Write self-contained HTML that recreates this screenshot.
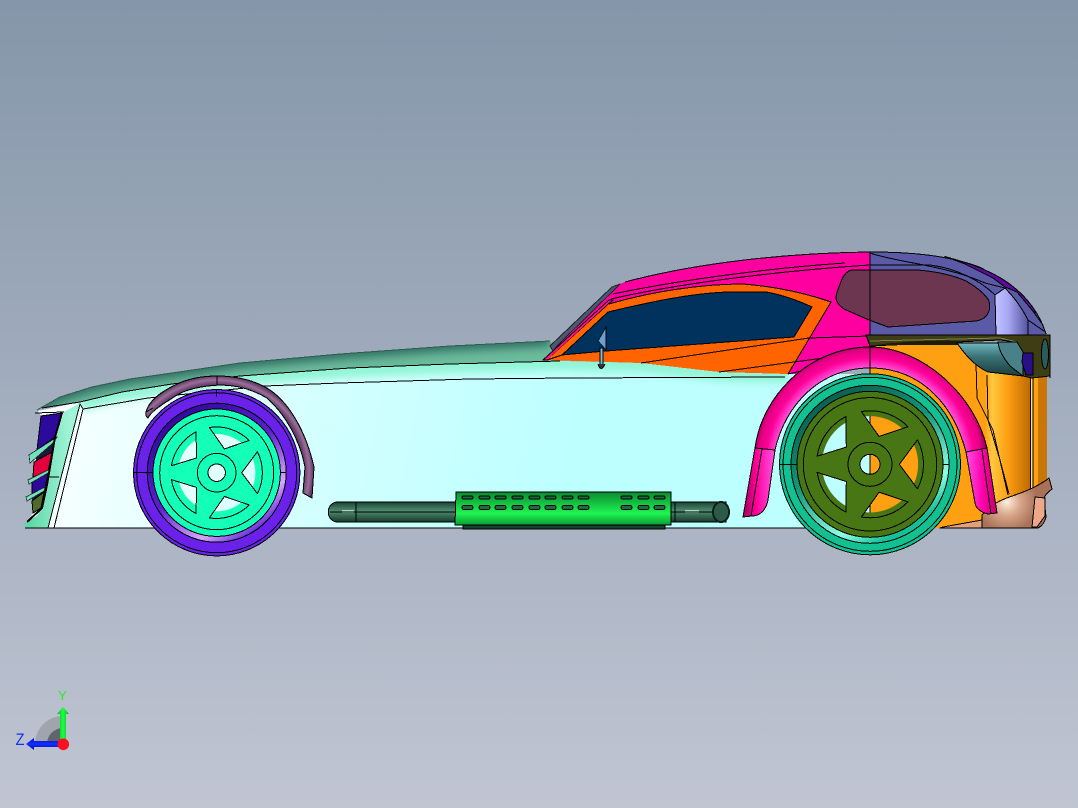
<!DOCTYPE html>
<html><head><meta charset="utf-8"><style>html,body{margin:0;padding:0;width:1078px;height:808px;overflow:hidden}svg{display:block}</style></head><body>
<svg width="1078" height="808" viewBox="0 0 1078 808" xmlns="http://www.w3.org/2000/svg" stroke-linejoin="round">
<defs>
<linearGradient id="bg" x1="0" y1="0" x2="0" y2="1"><stop offset="0" stop-color="#8596aa"/><stop offset="1" stop-color="#c0c5d2"/></linearGradient>
<linearGradient id="body" gradientUnits="userSpaceOnUse" x1="60" y1="400" x2="560" y2="500"><stop offset="0" stop-color="#f8ffff"/><stop offset=".5" stop-color="#d4ffff"/><stop offset="1" stop-color="#bdffff"/></linearGradient>
<linearGradient id="fascia" gradientUnits="userSpaceOnUse" x1="30" y1="0" x2="70" y2="0"><stop offset="0" stop-color="#60d8a8"/><stop offset="1" stop-color="#a0f4d8"/></linearGradient>
<linearGradient id="orange" gradientUnits="userSpaceOnUse" x1="985" y1="0" x2="1030" y2="0"><stop offset="0" stop-color="#ff9f12"/><stop offset=".16" stop-color="#ffc83e"/><stop offset=".5" stop-color="#ff9f12"/><stop offset="1" stop-color="#bf6a04"/></linearGradient>
<radialGradient id="farch" gradientUnits="userSpaceOnUse" cx="870" cy="462" r="118"><stop offset=".8" stop-color="#ff50d8"/><stop offset=".88" stop-color="#ff0098"/><stop offset=".95" stop-color="#e00080"/><stop offset="1" stop-color="#800045"/></radialGradient>
<linearGradient id="legL" gradientUnits="userSpaceOnUse" x1="746" y1="0" x2="774" y2="0"><stop offset="0" stop-color="#b00068"/><stop offset=".35" stop-color="#ff0098"/><stop offset="1" stop-color="#ff50e0"/></linearGradient>
<linearGradient id="legR" gradientUnits="userSpaceOnUse" x1="966" y1="0" x2="994" y2="0"><stop offset="0" stop-color="#ff50e8"/><stop offset=".6" stop-color="#ff00a8"/><stop offset="1" stop-color="#d00078"/></linearGradient>
<radialGradient id="rarch" gradientUnits="userSpaceOnUse" cx="217" cy="472" r="97"><stop offset=".89" stop-color="#5c3058"/><stop offset=".95" stop-color="#98709c"/><stop offset="1" stop-color="#5c3058"/></radialGradient>
<linearGradient id="pipe" x1="0" y1="0" x2="0" y2="1"><stop offset="0" stop-color="#1a4432"/><stop offset=".45" stop-color="#4f8c72"/><stop offset="1" stop-color="#163a2a"/></linearGradient>
<linearGradient id="muff" x1="0" y1="0" x2="0" y2="1"><stop offset="0" stop-color="#0a8a30"/><stop offset=".65" stop-color="#20f552"/><stop offset="1" stop-color="#0b9a34"/></linearGradient>
<linearGradient id="g1" x1="0" y1="0" x2=".7" y2="1"><stop offset="0" stop-color="#2a0090"/><stop offset=".55" stop-color="#5a20d0"/><stop offset=".85" stop-color="#d8a8f8"/><stop offset="1" stop-color="#6a30e0"/></linearGradient>
<linearGradient id="g2" x1="0" y1="0" x2=".6" y2="1"><stop offset="0" stop-color="#0a4a40"/><stop offset=".5" stop-color="#109878"/><stop offset=".85" stop-color="#90ffe8"/><stop offset="1" stop-color="#14c098"/></linearGradient>
<linearGradient id="ygrad" x1="0" y1="0" x2="1" y2="0"><stop offset="0" stop-color="#08b030"/><stop offset=".5" stop-color="#20ff40"/><stop offset="1" stop-color="#08b030"/></linearGradient>
<linearGradient id="zgrad" x1="0" y1="0" x2="0" y2="1"><stop offset="0" stop-color="#0808c0"/><stop offset=".5" stop-color="#1030ff"/><stop offset="1" stop-color="#0808a0"/></linearGradient>
<radialGradient id="bump" gradientUnits="userSpaceOnUse" cx="1007" cy="502" r="30"><stop offset="0" stop-color="#fdeede"/><stop offset=".45" stop-color="#d8a68a"/><stop offset="1" stop-color="#a87258"/></radialGradient>
<linearGradient id="lav" gradientUnits="userSpaceOnUse" x1="996" y1="0" x2="1030" y2="0"><stop offset="0" stop-color="#c0c0ff"/><stop offset=".35" stop-color="#a8a8f4"/><stop offset="1" stop-color="#4c4c96"/></linearGradient>
<linearGradient id="teal" x1="0" y1="0" x2="0" y2="1"><stop offset="0" stop-color="#6fb8c0"/><stop offset=".4" stop-color="#3c7478"/><stop offset="1" stop-color="#1a3c3c"/></linearGradient>
<filter id="bl" x="-10%" y="-50%" width="120%" height="200%"><feGaussianBlur stdDeviation="4"/></filter>
<filter id="bl2" x="-10%" y="-50%" width="120%" height="200%"><feGaussianBlur stdDeviation="5"/></filter>
<clipPath id="hoodc"><path d="M37,410L60,397L92,387L130,379L172,373L240,363L340,354L450,346L550,341L560,361L450,364L350,368L240,376L172,384L122,392L80,402L42,408Z"/></clipPath>
<clipPath id="bodyc"><path d="M42,408L80,402L122,392L172,384L240,376L350,368L450,364L560,361L641,363L719,372L788,374V528H25Z"/></clipPath>
<path id="h1" d="M25,0L35.5,-15.5 A40.7,40.7 0 0 1 35.5,15.5Z"/>
<path id="p1" d="M25,0L40.7,-21A46.7,46.7 0 0 1 40.7,21Z"/>
<path id="h2" d="M29.3,0L44,-19.5A48,48 0 0 1 44,19.5Z"/>
<path id="p2" d="M29.3,0L47.5,-24.5A53,53 0 0 1 47.5,24.5Z"/>
<mask id="m1" maskUnits="userSpaceOnUse" x="100" y="350" width="240" height="240"><rect x="100" y="350" width="240" height="240" fill="#fff"/>
<g transform="translate(216.7 472.7)" fill="#000"><use href="#h1"/><use href="#h1" transform="rotate(72)"/><use href="#h1" transform="rotate(144)"/><use href="#h1" transform="rotate(216)"/><use href="#h1" transform="rotate(288)"/><circle r="8.7"/></g></mask>
<mask id="m2" maskUnits="userSpaceOnUse" x="750" y="350" width="240" height="240"><rect x="750" y="350" width="240" height="240" fill="#fff"/>
<g transform="translate(870 464.3)" fill="#000"><use href="#h2"/><use href="#h2" transform="rotate(72)"/><use href="#h2" transform="rotate(144)"/><use href="#h2" transform="rotate(216)"/><use href="#h2" transform="rotate(288)"/><circle r="10"/></g></mask>
</defs>
<rect width="1078" height="808" fill="url(#bg)"/>

<g shape-rendering="crispEdges" stroke="#000" stroke-width="1">
<!-- body -->
<path d="M25,528L25,524L33,513L32,497L33,477L34,462L37,450L41,416L38,411L80,402L122,392L172,384L240,376L350,368L450,364L560,361L641,363L719,372L788,374L880,374L880,528Z" fill="url(#body)" stroke="none"/>
<g clip-path="url(#bodyc)"><path d="M80,404L122,394L172,386L240,378L350,370L450,366L560,363L641,365L719,374L788,376" fill="none" stroke="#90f4d4" stroke-width="14" filter="url(#bl)"/></g>
<!-- orange rear -->
<path d="M870,345L1047,345L1047,482L982,528L930,528L870,528Z" fill="url(#orange)" stroke="none"/>
<path d="M1030,378L1047,378L1047,486L1030,492Z" fill="#ff9f12" stroke="none"/>
<path d="M1038,378L1047,378L1047,482L1038,486Z" fill="#c8760a" stroke="none"/>
<path d="M1030.5,378h2.5v114h-2.5z" fill="#ffe070" stroke="#000"/>
<path d="M976,362L977,398L993,430L1008,495M987,375L988,420L1000,460L1009,494" fill="none"/>
<path d="M943,527L982,520V528H940Z" fill="#e2a07c"/>
<!-- bumper -->
<path d="M982,515C990,505 1000,500 1015,495C1030,490 1040,485 1049,478L1052,489C1048,492 1045,495 1044,498L1046,517Q1044,525 1038,528H982Z" fill="url(#bump)"/>
<path d="M1035,497L1045,498L1045,516L1037,527L1032,527Z" fill="#eca888"/>
<!-- hood -->
<path d="M37,410L60,397L92,387L130,379L172,373L240,363L340,354L450,346L550,341L560,361L450,364L350,368L240,376L172,384L122,392L80,402L42,408Z" fill="#6cbc9e" stroke="none"/>
<g clip-path="url(#hoodc)"><path d="M37,408L60,395L92,385L130,377L172,371L240,361L340,352L450,344L550,339" fill="none" stroke="#2f6c5e" stroke-width="14" filter="url(#bl2)"/></g>
<path d="M37,410L60,397L92,387L130,379L172,373L240,363L340,354L450,346L550,341" fill="none" stroke="#2e5c50"/>
<path d="M42,408L80,402L122,392L172,384L240,376L350,368L450,364L560,361M83,409L148,398L265,386L340,383L470,379L570,378L785,377" fill="none"/>
<!-- lamp backing + fascia -->
<path d="M41,416L62,413L55,437L47,485L42,508L33,513L32,497L37,450Z" fill="#1a1a40" stroke="none"/>
<path d="M25,528L24,524L38,515L45,497L55,437L64,412L80,403L83,409L54,528Z" fill="url(#fascia)" stroke="none"/>
<path d="M35,413L64,412" fill="none"/>
<path d="M80,404L83,409L54,528L48,528Z" fill="#f4ffff"/>
<path d="M44,477L59,477" fill="none"/>
<path d="M41,416L62,413L55,437L37,450Z" fill="#2c0a9c"/>
<path d="M34,462L52,452L48,472L33,477Z" fill="#e4003c"/>
<path d="M32,478L48,474L45,488L32,497Z" fill="#2c0a9c"/>
<path d="M32,501L44,492L41,508L33,513Z" fill="#4c6c2a"/>
<g fill="#72e4bc" stroke="#222" stroke-width=".8"><path d="M29,455L57,437L53,443L30,463Z"/><path d="M28,480L50,469L48,473L29,484Z"/><path d="M26,497L45,487L44,491L27,501Z"/></g>
<path d="M62,413L55,437L47,485L42,508L27,522" fill="none" stroke-width="2"/>
<path d="M25,528H880" fill="none"/>

<!-- roof magenta -->
<path d="M543,360L613,287L625,282C700,262 790,253 870,252V352L845,350L803,374L719,372L641,363L562,359Z" fill="#ff00a0" stroke="none"/>
<path d="M625,282C700,262 790,253 870,252" fill="none"/>
<path d="M550,346L612,287L620,284L557,346L553,351Z" fill="#4c5872" stroke="#222"/>
<path d="M543,360L609,300L613,300L554,354L548,360Z" fill="#ff1088"/>
<!-- orange frame -->
<path d="M547,360L609,304C650,292 700,284 743,284C780,287 808,294 831,302L809,338L788,374L719,372L641,363Z" fill="#ff6400" stroke="none"/>
<path d="M609,304C650,292 700,284 743,284C780,287 808,294 831,302L788,374" fill="none"/>
<path d="M562,355L608,312C650,302 692,293 729,292H766C783,295 799,301 812,307L794,337L606,351Z" fill="#00325e"/>
<path d="M562,355L547,360M641,363L809,338M719,372L869,352M809,338L869,336M788,374L869,356" fill="none"/>
<path d="M611,299C680,283 780,271 869,265M613,294C680,280 770,268 845,263" fill="none"/>
<path d="M606,327L598,341L606,350Z" fill="#6aa0d0" stroke="#0a1a30"/>
<path d="M606,326V351" fill="none"/>
<path d="M600,348h3v18h-3z" fill="#7ac0e0"/>
<path d="M598,364Q601,373 605,364" fill="#334"/>

<!-- rear purple panel -->
<path d="M870,252C915,252 955,256 985,270C1015,283 1037,305 1046,334V337H870Z" fill="#5a5aa6" stroke="none"/>
<path d="M945,256.5L966,262.7C975,265 982,268 985,270C1007.5,279.75 1025.5,294.6 1037,313.6L1032,310L1017,292L1005,287L993,278L965,264Z" fill="#5c0a9a"/>
<path d="M995,295L1005,288C1014,297 1022,308 1028,320V335H996Z" fill="url(#lav)"/>
<path d="M870,252C915,252 955,256 985,270C1015,283 1037,305 1046,334" fill="none"/>
<path d="M870,253C895,262 945,265 985,283L1005,288M870,265L930,265C955,268 980,280 995,295M1028,320L1044,331M1028,320V336M1032,310L1043,325" fill="none"/>
<!-- rear glass -->
<path d="M851,270H918C940,272 955,276 966,281C978,288 986,295 989,301C990,306 990,310 988,313C986,318 981,320 976,321L888,327L869,320L844,309C838,305 836,301 836,297C837,290 840,285 842,279C845,273 848,271 851,270Z" fill="#6d3650"/>
<path d="M870,252V528" fill="none"/>

<!-- rear olive band -->
<path d="M866,335H1050V376L1032,378L1023,376V352L1017,342L1000,340L870,346Z" fill="#3e3e14"/>
<path d="M870,341L1000,338L1017,342L1023,352" fill="none" stroke="#808048"/>
<path d="M870,346C900,341 930,340 960,341L970,345H880Z" fill="#1c1c0a" stroke="none"/>
<path d="M957,343H998L1000,350L1008,363L1023,376L988,372C975,366 966,356 957,343Z" fill="url(#teal)"/>
<path d="M998,342L1017,342L1023,352V376L1010,366C1002,356 999,350 998,342Z" fill="#4a8088"/>
<path d="M1023,353H1033V375H1026L1022,362Z" fill="#2a1088"/>
<ellipse cx="1045" cy="354" rx="3.5" ry="15" fill="#2a5a5a"/>
<path d="M1050,336V378" fill="none"/>

<!-- rear fender -->
<path d="M755,448C762,395 810,347 870,347C922,347 975,395 987,448L966,452C955,410 925,368 870,368C820,368 785,405 775,450Z" fill="url(#farch)"/>
<path d="M755,448L775,450L768,500C766,510 760,516 752,516L743,517Z" fill="url(#legL)"/>
<path d="M966,452L987,448L997,513L988,514C980,512 976,508 975,503Z" fill="url(#legR)"/>
<path d="M870,347V368M751,516L762,449M982,450L991,514" fill="none"/>

<!-- front fender -->
<path d="M146,412C150,398 165,390 177,384C190,378 205,376 217,376C240,376 258,382 270,390C290,404 306,432 314,467L312,498L303,493L305,467C300,440 285,414 267,398C250,388 235,385 220,385C200,386 185,390 177,395C165,403 152,410 148,418Q145,416 146,412Z" fill="url(#rarch)"/>
<path d="M217,376V385M146,412L153,408" fill="none"/>

<!-- front wheel -->
<circle cx="216.7" cy="472.7" r="73.4" fill="none" stroke="#6a22ea" stroke-width="19.6"/>
<circle cx="216.7" cy="472.7" r="83.2" fill="none"/>
<circle cx="216.7" cy="472.7" r="80" fill="none"/>
<circle cx="216.7" cy="472.7" r="66.2" fill="none" stroke="url(#g1)" stroke-width="6"/>
<circle cx="216.7" cy="472.7" r="69.5" fill="none"/>
<circle cx="216.7" cy="472.7" r="63.7" fill="#14ffb8" mask="url(#m1)"/>
<circle cx="216.7" cy="472.7" r="57" fill="none"/>
<circle cx="216.7" cy="472.7" r="19.3" fill="none"/>
<circle cx="216.7" cy="472.7" r="8.7" fill="none"/>
<g transform="translate(216.7 472.7)" fill="none"><use href="#p1"/><use href="#p1" transform="rotate(72)"/><use href="#p1" transform="rotate(144)"/><use href="#p1" transform="rotate(216)"/><use href="#p1" transform="rotate(288)"/><path d="M-83,0H-64M64,0H70M0,-83V-76"/></g>

<!-- rear wheel -->
<circle cx="870" cy="464.3" r="82" fill="none" stroke="#12c092" stroke-width="17"/>
<circle cx="870" cy="464.3" r="90.5" fill="none"/>
<circle cx="870" cy="464.3" r="87" fill="none"/>
<circle cx="870" cy="464.3" r="75.5" fill="none" stroke="url(#g2)" stroke-width="7"/>
<circle cx="870" cy="464.3" r="79" fill="none"/>
<circle cx="870" cy="464.3" r="73" fill="#487614" mask="url(#m2)"/>
<circle cx="870" cy="464.3" r="66.7" fill="none"/>
<circle cx="870" cy="464.3" r="22" fill="none"/>
<circle cx="870" cy="464.3" r="10" fill="none"/>
<g transform="translate(870 464.3)" fill="none"><use href="#p2"/><use href="#p2" transform="rotate(72)"/><use href="#p2" transform="rotate(144)"/><use href="#p2" transform="rotate(216)"/><use href="#p2" transform="rotate(288)"/><path d="M-90,0H-73M73,0H79"/></g>

<!-- exhaust -->
<path d="M338,502H726V522H338C325,522 325,502 338,502Z" fill="url(#pipe)"/>
<rect x="342" y="510" width="12" height="3" fill="#a8d8c0" stroke="none"/>
<rect x="685" y="510" width="14" height="3" fill="#a8d8c0" stroke="none"/>
<path d="M330,512H724M356,502V522M675,502V522" fill="none"/>
<ellipse cx="721" cy="512" rx="8" ry="10" fill="#2c5a48" stroke-width="2" stroke="#0c2018"/>
<path d="M463,525H665V529H463Z" fill="#1a4030"/>
<path d="M456,492H671V525H455Z" fill="url(#muff)"/>
<g fill="#1f6a40" stroke="#000" stroke-width="1">
<g><rect x="462" y="496" width="11" height="3" rx="1.5"/><rect x="479" y="496" width="11" height="3" rx="1.5"/><rect x="495" y="496" width="11" height="3" rx="1.5"/><rect x="512" y="496" width="11" height="3" rx="1.5"/><rect x="529" y="496" width="11" height="3" rx="1.5"/><rect x="545" y="496" width="11" height="3" rx="1.5"/><rect x="562" y="496" width="11" height="3" rx="1.5"/><rect x="578" y="496" width="11" height="3" rx="1.5"/><rect x="621" y="496" width="11" height="3" rx="1.5"/><rect x="638" y="496" width="11" height="3" rx="1.5"/><rect x="654" y="496" width="11" height="3" rx="1.5"/></g>
<g transform="translate(0 9.5)"><rect x="462" y="496" width="11" height="4" rx="2"/><rect x="479" y="496" width="11" height="4" rx="2"/><rect x="495" y="496" width="11" height="4" rx="2"/><rect x="512" y="496" width="11" height="4" rx="2"/><rect x="529" y="496" width="11" height="4" rx="2"/><rect x="545" y="496" width="11" height="4" rx="2"/><rect x="562" y="496" width="11" height="4" rx="2"/><rect x="578" y="496" width="11" height="4" rx="2"/><rect x="621" y="496" width="11" height="4" rx="2"/><rect x="638" y="496" width="11" height="4" rx="2"/><rect x="654" y="496" width="11" height="4" rx="2"/></g>
<path d="M462,492h11M479,492h11M495,492h11M512,492h11M529,492h11M545,492h11M562,492h11M578,492h11M621,492h11M638,492h11M654,492h11" fill="none"/>
</g>
</g>

<!-- triad -->
<path d="M35,744A28,28 0 0 1 63,716V744Z" fill="#9fa4ad"/>
<path d="M47,744A16,16 0 0 1 63,728V744Z" fill="#60646c"/>
<path d="M60,744V714H57L63,707L69,714H66V744Z" fill="url(#ygrad)"/>
<path d="M63,741H34V738L26,744L34,750V747H63Z" fill="url(#zgrad)"/>
<circle cx="63.3" cy="744.3" r="5.8" fill="#fb0f1f"/>
<text x="62.5" y="700" font-family="Liberation Sans, sans-serif" font-size="13" fill="#20f020" text-anchor="middle">Y</text>
<text transform="translate(20 745) scale(.85 1)" font-family="Liberation Sans, sans-serif" font-size="17" fill="#1030f0" text-anchor="middle">Z</text>
</svg>
</body></html>
